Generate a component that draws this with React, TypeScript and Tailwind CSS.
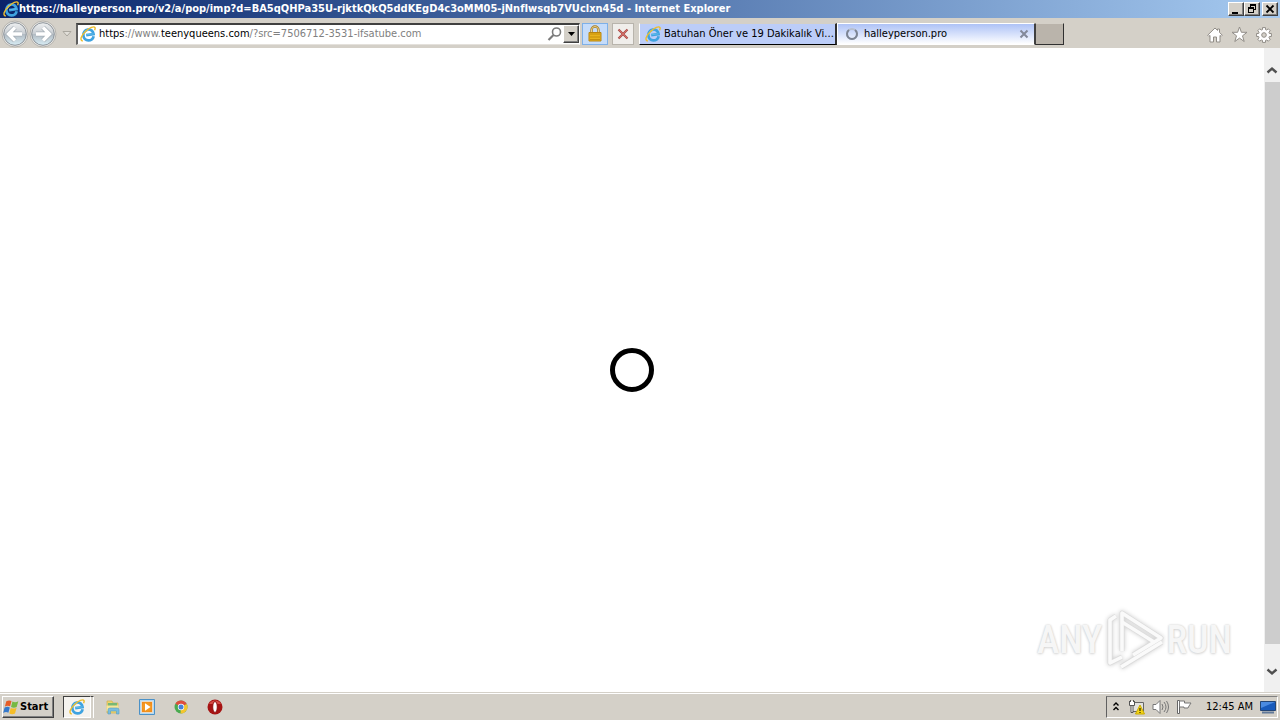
import React from "react";

function IeLogo({ className }: { className: string }) {
  return (
    <svg viewBox="0 0 16 16" className={className} aria-hidden="true">
      <g transform="rotate(-8 8 8)">
        <path d="M13.300 11A5.200 5.200 0 0 1 3.200 9 5.200 5.200 0 0 1 8.400 3.600c3.300 0 5.200 2.400 5.100 5.300H6" fill="none" stroke="#3fa3e0" strokeWidth="2.700" />
        <path d="M4.500 7.200A4.300 4.300 0 0 1 8.400 4" fill="none" stroke="#8adcf8" strokeWidth="1" />
        <path d="M6 8.600h7.500" stroke="#62bdeb" strokeWidth="1" />
      </g>
      <path d="M2.800 15C-.5 14.500 1 9.500 5.500 5.400 9.500 1.700 14-.3 15 1.600c.3.700.1 1.600-.4 2.600" fill="none" stroke="#edbd2c" strokeWidth="1.400" />
    </svg>
  );
}

function NavArrow({ label, back }: { label: string; back?: boolean }) {
  return (
    <button aria-label={label} className="h-7 w-7 shrink-0">
      <svg viewBox="0 0 28 28" className="h-7 w-7" aria-hidden="true">
        <defs>
          <linearGradient id={back ? "ballBack" : "ballNext"} x1="0" y1="0" x2="0" y2="1">
            <stop offset="0" stopColor="#eef0f1" />
            <stop offset=".48" stopColor="#c9ced3" />
            <stop offset=".52" stopColor="#b3bcc4" />
            <stop offset="1" stopColor="#d8edf5" />
          </linearGradient>
        </defs>
        <circle cx="14" cy="14" r="13" fill="#e9e8e5" stroke="#b5b3ae" />
        <circle cx="14" cy="14" r="11.300" fill={back ? "url(#ballBack)" : "url(#ballNext)"} stroke="#8b9299" />
        <path
          d={back ? "M14 7.500 7.500 14l6.500 6.500M8.500 14H21" : "M14 7.500l6.500 6.500-6.500 6.500M19.500 14H7"}
          fill="none" stroke="#a4adb5" strokeWidth="4.800"
        />
        <path
          d={back ? "M14 7.500 7.500 14l6.500 6.500M8.500 14H21" : "M14 7.500l6.500 6.500-6.500 6.500M19.500 14H7"}
          fill="none" stroke="#fff" strokeWidth="3.400"
        />
      </svg>
    </button>
  );
}

const raised =
  "border border-t-white border-l-white border-r-[#404040] border-b-[#404040] bg-[#d4d0c8] shadow-[inset_-1px_-1px_0_#808080]";

function TitleBar() {
  return (
    <header className="flex h-[18px] shrink-0 items-center bg-linear-to-r from-[#0a246a] to-[#a6caf0] pr-0.5 pl-[3px]">
      <IeLogo className="h-4 w-4 shrink-0" />
      <h1 className="min-w-0 flex-1 truncate text-[11px] leading-4 font-bold text-white">
        https://halleyperson.pro/v2/a/pop/imp?d=BA5qQHPa35U-rjktkQkQ5ddKEgD4c3oMM05-jNnfIwsqb7VUclxn45d - Internet Explorer
      </h1>
      <button aria-label="Minimize" className={`h-3.5 w-4 shrink-0 ${raised}`}>
        <svg viewBox="0 0 14 12" className="h-3 w-3.5"><path d="M3 9h6v2H3z" /></svg>
      </button>
      <button aria-label="Restore" className={`h-3.5 w-4 shrink-0 ${raised}`}>
        <svg viewBox="0 0 14 12" className="h-3 w-3.5">
          <path d="M5 1h6v6H9V6h1V3H6v1H5zM3 4h6v6H3zM4 6v3h4V6z" fillRule="evenodd" />
        </svg>
      </button>
      <button aria-label="Close window" className={`ml-0.5 h-3.5 w-4 shrink-0 ${raised}`}>
        <svg viewBox="0 0 14 12" className="h-3 w-3.5"><path d="m3.500 2.500 7 7m0-7-7 7" stroke="#000" strokeWidth="1.800" /></svg>
      </button>
    </header>
  );
}

function Toolbar() {
  return (
    <nav className="flex h-[30px] shrink-0 items-center bg-[#d4d0c8] pt-px pl-px">
      <NavArrow label="Back" back />
      <NavArrow label="Forward" />
      <button aria-label="Recent pages" className="flex h-6 w-[19px] shrink-0 items-center justify-center">
        <svg viewBox="0 0 10 6" className="h-1.5 w-2.5"><path d="M1 .5h8L5 5z" fill="#e2dfd9" stroke="#aaa79f" /></svg>
      </button>
      <div className="flex h-[22px] w-[504px] shrink-0 items-center border border-t-2 border-l-2 border-t-[#404040] border-l-[#606060] border-r-white border-b-[#e4e1dc] bg-white pl-0.5">
        <IeLogo className="h-4 w-4 shrink-0" />
        <div role="textbox" aria-label="Address" className="ml-[3px] min-w-0 flex-1 truncate text-[11px] leading-4 text-[#808080]">
          <span className="text-black">https</span>://www.<span className="text-black">teenyqueens.com</span>/?src=7506712-3531-ifsatube.com
        </div>
        <button aria-label="Search" className="h-4 w-4 shrink-0">
          <svg viewBox="0 0 16 16" className="h-4 w-4" fill="none" stroke="#7b7b7b">
            <circle cx="9.500" cy="6" r="4" strokeWidth="1.600" /><path d="m6.500 9-5 5" strokeWidth="2.200" />
          </svg>
        </button>
        <button aria-label="Show address list" className={`flex h-[18px] w-4 shrink-0 items-center justify-center ${raised}`}>
          <svg viewBox="0 0 7 4" className="h-1 w-[7px]"><path d="M0 0h7L3.500 4z" /></svg>
        </button>
      </div>
      <button aria-label="Security report" className="ml-0.5 flex h-[22px] w-[26px] shrink-0 items-center justify-center border border-[#7eb0e8] bg-[#c5dcfa]">
        <svg viewBox="0 0 16 18" className="h-[18px] w-4">
          <path d="M4.500 8V5a3.500 3.500 0 0 1 7 0v3" fill="none" stroke="#a47b26" strokeWidth="2.400" />
          <path d="M4.500 8V5a3.500 3.500 0 0 1 7 0v3" fill="none" stroke="#ead28b" />
          <path d="M2 7.500h12V16H2z" fill="#e8b31d" stroke="#b98410" />
          <path d="M3 9h10M3 12h10M3 14.500h10" stroke="#c58f0d" />
        </svg>
      </button>
      <button aria-label="Stop" className="ml-1 flex h-[22px] w-[22px] shrink-0 items-center justify-center border border-[#b8b4ac] bg-[#f0eeeb]">
        <svg viewBox="0 0 12 12" className="h-3 w-3" fill="none">
          <path d="m1.500 1.500 9 9m0-9-9 9" stroke="#a94f4b" strokeWidth="2.200" /><path d="m2 2 8 8m0-8-8 8" stroke="#d66c65" />
        </svg>
      </button>
      <div role="tablist" className="ml-[5px] flex h-[22px] min-w-0">
        <button role="tab" aria-selected="false" className="flex w-[198px] items-center border-t border-r-2 border-b border-l border-t-[#d4d0c8] border-l-white border-r-[#303030] border-b-black bg-[#bccdf8] pl-[5px]">
          <IeLogo className="h-4 w-4 shrink-0" />
          <span className="ml-[3px] text-[11px] leading-4 whitespace-nowrap">Batuhan Öner ve 19 Dakikalık Vi...</span>
        </button>
        <div role="tab" aria-selected="true" tabIndex={0} className="flex w-[198px] items-center border border-white border-r-[#404040] bg-linear-to-b from-[#aec2f6] to-white pl-[7px]">
          <svg viewBox="0 0 14 14" className="h-3.5 w-3.5 shrink-0" fill="none" strokeWidth="2">
            <circle cx="7" cy="7" r="5" stroke="#b8c0cf" /><path d="M4 3a5 5 0 1 0 6 0" stroke="#7c8494" />
          </svg>
          <span className="ml-[5px] flex-1 truncate text-[11px] leading-4">halleyperson.pro</span>
          <button aria-label="Close tab" className="mr-[5px] h-2.5 w-2.5 shrink-0">
            <svg viewBox="0 0 10 10" className="h-2.5 w-2.5"><path d="m1.500 1.500 7 7m0-7-7 7" stroke="#83899a" strokeWidth="2" /></svg>
          </button>
        </div>
        <button aria-label="New tab" className="w-[29px] border border-t-[#d4d0c8] border-l-[#404040] border-r-[#303030] border-b-[#303030] bg-[#bab4ab]" />
      </div>
      <div className="ml-auto flex shrink-0 items-center gap-2 pt-0.5 pr-2">
        <button aria-label="Home" className="h-4 w-4">
          <svg viewBox="0 0 16 16" className="h-4 w-4"><path d="M8 1 .7 8.200l1.200 1.200L3 8.400V15h3.500v-5h3v5H13V8.400l1.100 1 1.200-1.200L12.500 5.400V2h-2v1.400z" fill="#fff" stroke="#918d87" /></svg>
        </button>
        <button aria-label="Favorites" className="h-[17px] w-[17px]">
          <svg viewBox="0 0 17 17" className="h-[17px] w-[17px]"><path d="m8.500 1 1.900 5.300H16l-4.500 3.500 1.700 5.700-4.700-3.400-4.700 3.400 1.700-5.700L1 6.300h5.600z" fill="#fff" stroke="#918d87" /></svg>
        </button>
        <button aria-label="Tools" className="h-4 w-4">
          <svg viewBox="0 0 16 16" className="h-4 w-4">
            <path d="m6.500.6h3v2l1.300.5 1.400-1.400 2.100 2.100-1.400 1.400.5 1.300h2v3h-2l-.5 1.300 1.400 1.400-2.100 2.100-1.400-1.400-1.300.5v2h-3v-2l-1.300-.5-1.400 1.400-2.100-2.100 1.400-1.400-.5-1.300h-2v-3h2l.5-1.300-1.400-1.400 2.100-2.100 1.400 1.400 1.300-.5z" fill="#fff" stroke="#918d87" />
            <circle cx="8" cy="8" r="2.300" fill="#d4d0c8" stroke="#918d87" />
          </svg>
        </button>
      </div>
    </nav>
  );
}

function Watermark() {
  const word =
    "font-['Roboto_Condensed','Open_Sans_Condensed',Roboto,sans-serif] text-[38px] leading-10 font-medium text-[#f6f6f6] [text-shadow:0_0_2px_#c8c8c8,0_1px_3px_#dddddd]";
  return (
    <div className="absolute right-8 bottom-5 flex items-center gap-0.5">
      <span className={word}>ANY</span>
      <svg viewBox="0 0 60 64" className="h-16 w-[60px] drop-shadow-[0_0_2px_#cccccc]" fill="none" aria-hidden="true">
        <g stroke="#dcdcdc" strokeWidth="5" strokeLinejoin="round">
          <path d="M18 43V5l39 25-28 17" /><path d="M18 14l32 20" />
          <path d="M12 8 6 12v43l12-6M17 59l41-25" />
        </g>
        <g stroke="#fafafa" strokeWidth="3.500" strokeLinejoin="round">
          <path d="M18 43V5l39 25-28 17" /><path d="M18 14l32 20" />
          <path d="M12 8 6 12v43l12-6M17 59l41-25" />
        </g>
      </svg>
      <span className={word}>RUN</span>
    </div>
  );
}

function Taskbar() {
  const item = "flex h-[22px] w-[34px] items-center justify-center";
  return (
    <footer className="flex h-7 shrink-0 items-center border-t border-[#d4d0c8] bg-[#d4d0c8] pr-0.5 pl-0.5 shadow-[inset_0_1px_0_#fff]">
      <button className={`flex h-[22px] w-[52px] items-center ${raised}`}>
        <svg viewBox="0 0 18 16" className="h-4 w-[17px] shrink-0" aria-hidden="true">
          <path d="M3.500 2q3-1.800 5.500-.3L7.500 7.300Q5 5.800 2 7.500z" fill="#e65d27" />
          <path d="M10 2.300q3 1.500 6.200-.3L14.500 8q-3 1.600-6 0z" fill="#76b944" />
          <path d="M1.700 8.600q3-1.800 5.500-.2l-1.500 5.700Q3.200 12.600.2 14.300z" fill="#3579cb" />
          <path d="M8.200 9q3 1.500 6.200-.2l-1.700 6q-3 1.600-6 0z" fill="#f5bd27" />
        </svg>
        <span className="text-[11px] leading-4 font-bold">Start</span>
      </button>
      <button aria-label="Internet Explorer" className="ml-[9px] flex h-[22px] w-7 items-center justify-center border border-t-[#404040] border-l-[#404040] border-r-white border-b-white bg-[#f5f3ef]">
        <IeLogo className="h-4 w-4" />
      </button>
      <span className="h-[22px] w-[3px] border-t border-r border-t-[#404040] border-r-white" />
      <div className="ml-0.5 flex">
        <button aria-label="File Explorer" className={item}>
          <svg viewBox="0 0 16 16" className="h-4 w-4">
            <path d="M2 2h5l1 2h5v10H2z" fill="#eed46d" stroke="#ceb04e" strokeWidth=".7" />
            <path d="M3 4h9v3H3z" fill="#77b875" /><path d="M1.500 6.500h12V12h-12z" fill="#f6e699" />
            <path d="M3 15v-4q0-2 2-2h7q2 0 2 2v4h-2.500v-3h-6v3z" fill="#79bddf" stroke="#549fc5" strokeWidth=".6" />
          </svg>
        </button>
        <button aria-label="Media Player" className={item}>
          <svg viewBox="0 0 16 16" className="h-4 w-4">
            <path d="M.5.5h15v15H.5z" fill="#b5d9f1" stroke="#4b91c7" /><path d="M2.500 2.500h11v11h-11z" fill="#f08b1c" stroke="#fff" strokeWidth=".5" />
            <circle cx="8" cy="8" r="4.800" fill="#f49820" /><path d="m6 4.300 5.500 3.700L6 11.700z" fill="#fff" />
          </svg>
        </button>
        <button aria-label="Chrome" className={item}>
          <svg viewBox="0 0 14 14" className="h-3.5 w-3.5">
            <circle cx="7" cy="7" r="6.500" fill="#4aaa50" /><path d="M7 7 1.400 3.700A6.500 6.500 0 0 1 12.700 3.900z" fill="#df4d3d" />
            <path d="m7 7 5.700-3.100A6.500 6.500 0 0 1 6.500 13.500z" fill="#f4c52e" />
            <circle cx="7" cy="7" r="3.200" fill="#fff" /><circle cx="7" cy="7" r="2.500" fill="#4581d8" />
          </svg>
        </button>
        <button aria-label="Opera" className={item}>
          <svg viewBox="0 0 16 16" className="h-4 w-4">
            <circle cx="8" cy="8" r="7.500" fill="#a61313" /><path d="M2 5a7 7 0 0 1 12 0z" fill="#d64b46" />
            <ellipse cx="8" cy="8" rx="2.300" ry="5.500" fill="#fff" stroke="#8d1010" />
          </svg>
        </button>
      </div>
      <div className="ml-auto flex h-[22px] items-center border border-t-[#808080] border-l-[#606060] border-r-white border-b-white pr-px pl-1">
        <button aria-label="Show hidden icons" className="h-4 w-2.5">
          <svg viewBox="0 0 10 16" className="h-4 w-2.5" fill="none" stroke="#000" strokeWidth="1.400"><path d="M2.500 6.500 5 4l2.500 2.500M2.500 11 5 8.500 7.500 11" /></svg>
        </button>
        <button aria-label="Network" className="ml-[7px] h-4 w-[18px]">
          <svg viewBox="0 0 18 16" className="h-4 w-[18px]">
            <path d="M4.500 3.500h11v9h-11z" fill="#e3e2de" stroke="#666" />
            <path d="M1.500 2v4.500h5V2M2.500 1v2m3-2v2M3 6.500v7h2v-7" fill="#fff" stroke="#555" />
            <path d="m12 6 4.500 9h-9z" fill="#f4d417" stroke="#c9aa00" /><path d="M12 9v3m0 1v1" stroke="#000" />
          </svg>
        </button>
        <button aria-label="Volume" className="ml-1.5 h-4 w-[18px]">
          <svg viewBox="0 0 18 16" className="h-4 w-[18px]" fill="none" stroke="#777">
            <path d="M1 5.500h3l4-4v13l-4-4H1z" fill="#fff" /><path d="M10 5q2 3 0 6M12 3q4 5 0 10M14.500 2q4 6 0 12" />
          </svg>
        </button>
        <button aria-label="Action Center" className="ml-1.5 h-4 w-4">
          <svg viewBox="0 0 16 16" className="h-4 w-4"><path d="M1.500 1.500h2v13h-2z" fill="#fff" stroke="#666" /><path d="M3.500 2h5v2h6.500l-2 3-1 2H8V8H3.500z" fill="#fff" stroke="#777" /></svg>
        </button>
        <time className="ml-3.5 text-[11px] leading-4 whitespace-nowrap">12:45 AM</time>
        <button aria-label="Show desktop" className="ml-[7px] h-4 w-4">
          <svg viewBox="0 0 16 16" className="h-4 w-4">
            <path d="M.5 2.500h15v9H.5z" fill="#185abb" stroke="#234575" /><path d="M1 3h14L1 9z" fill="#4a8ae0" /><path d="M2 13.500h12" stroke="#617999" strokeWidth="2" />
          </svg>
        </button>
      </div>
    </footer>
  );
}

export default function App() {
  return (
    <div className="flex h-screen flex-col overflow-hidden bg-white font-['DejaVu_Sans_Condensed','DejaVu_Sans',sans-serif] text-black">
      <TitleBar />
      <Toolbar />
      <div className="flex min-h-0 flex-1">
        <main className="relative flex min-w-0 flex-1 items-center justify-center">
          <div role="status" aria-label="Loading" className="h-11 w-11 rounded-full border-5 border-black" />
          <Watermark />
        </main>
        <aside className="flex w-4 shrink-0 flex-col bg-[#f0f0f0] pt-[17px] pb-3.5">
          <button aria-label="Scroll up" className="flex h-[17px] shrink-0 justify-center pt-px">
            <svg viewBox="0 0 12 8" className="h-2 w-3"><path d="m1.500 6.500 4.500-4 4.500 4" fill="none" stroke="#505050" strokeWidth="2.400" /></svg>
          </button>
          <div className="ml-px flex-1 bg-[#cdcdcd]" />
          <button aria-label="Scroll down" className="flex h-[34px] shrink-0 items-end justify-center pb-0.5">
            <svg viewBox="0 0 12 8" className="h-2 w-3"><path d="m1.500 1.500 4.500 4 4.500-4" fill="none" stroke="#505050" strokeWidth="2.400" /></svg>
          </button>
        </aside>
      </div>
      <Taskbar />
    </div>
  );
}
